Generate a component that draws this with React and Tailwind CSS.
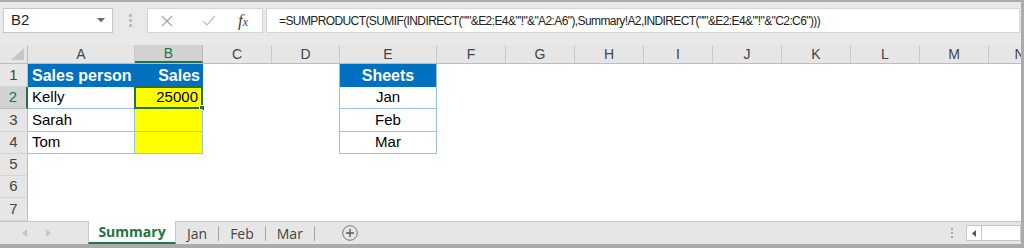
import React from 'react'

const cols = [
  { key: 'A', w: 'w-[107px]' },
  { key: 'B', w: 'w-[68px]' },
  { key: 'C', w: 'w-[69px]' },
  { key: 'D', w: 'w-[68px]' },
  { key: 'E', w: 'w-[97px]' },
  { key: 'F', w: 'w-[69px]' },
  { key: 'G', w: 'w-[69px]' },
  { key: 'H', w: 'w-[69px]' },
  { key: 'I', w: 'w-[69px]' },
  { key: 'J', w: 'w-[69px]' },
  { key: 'K', w: 'w-[69px]' },
  { key: 'L', w: 'w-[69px]' },
  { key: 'M', w: 'w-[69px]' },
  { key: 'N', w: 'w-[62px]' },
]

const rowHeights = ['h-[23px]', 'h-[22px]', 'h-[23px]', 'h-[22px]', 'h-[22px]', 'h-[22px]', 'h-[23px]']

const formula =
  '=SUMPRODUCT(SUMIF(INDIRECT("\'"&E2:E4&"\'!"&"A2:A6"),Summary!A2,INDIRECT("\'"&E2:E4&"\'!"&"C2:C6")))'

const blue = 'border-[#9bc2e6]'

// contents and styling of the filled cells
const cells = {
  A1: { text: 'Sales person', cls: 'bg-[#0070c0] text-white font-bold text-[16px] justify-start pl-[4px]' },
  B1: { text: 'Sales', cls: 'bg-[#0070c0] text-white font-bold text-[16px] justify-end pr-[3px]' },
  E1: { text: 'Sheets', cls: `bg-[#0070c0] text-white font-bold text-[16px] justify-center border-r ${blue}` },
  D1: { cls: `border-r ${blue}` },
  A2: { text: 'Kelly', cls: `justify-start pl-[4px] border-r border-b ${blue}` },
  B2: { text: '25000', cls: `bg-[#ffff00] justify-end pr-[4px] border-r border-b ${blue}`, selected: true },
  D2: { cls: `border-r ${blue}` },
  E2: { text: 'Jan', cls: `justify-center border-r border-b ${blue}` },
  A3: { text: 'Sarah', cls: `justify-start pl-[4px] border-r border-b ${blue}` },
  B3: { cls: `bg-[#ffff00] border-r border-b ${blue}` },
  D3: { cls: `border-r ${blue}` },
  E3: { text: 'Feb', cls: `justify-center border-r border-b ${blue}` },
  A4: { text: 'Tom', cls: `justify-start pl-[4px] border-r border-b ${blue}` },
  B4: { cls: `bg-[#ffff00] border-r border-b ${blue}` },
  D4: { cls: `border-r ${blue}` },
  E4: { text: 'Mar', cls: `justify-center border-r border-b ${blue}` },
}

function FormulaBar() {
  return (
    <div className="h-[43px] flex items-start pt-[6px] pl-[3px] pr-[1px] shrink-0">
      <div className="w-[110px] h-[25px] bg-white border border-[#c6c6c6] flex items-center justify-between pl-[7px] pr-[7px]">
        <span className="text-[15px] text-[#222]">B2</span>
        <svg width="8" height="5" viewBox="0 0 8 5">
          <path d="M0 0h8L4 4.5z" fill="#6b6b6b" />
        </svg>
      </div>
      <div className="w-[34px] h-[25px] flex flex-col items-center justify-center gap-[2px]">
        <span className="w-[3px] h-[3px] bg-[#bdbdbd]" />
        <span className="w-[3px] h-[3px] bg-[#bdbdbd]" />
        <span className="w-[3px] h-[3px] bg-[#bdbdbd]" />
      </div>
      <div className="w-[116px] h-[25px] bg-white border border-[#d4d4d4] flex items-center">
        <svg className="ml-[13px]" width="12" height="12" viewBox="0 0 12 12">
          <path d="M1 1l10 10M11 1L1 11" stroke="#a6a6a6" strokeWidth="1.2" />
        </svg>
        <svg className="ml-[29px]" width="14" height="11" viewBox="0 0 14 11">
          <path d="M1 6l4 4 8-9" stroke="#c4c4c4" strokeWidth="1.4" fill="none" />
        </svg>
        <span className="ml-[22px] font-['Liberation_Serif',serif] italic text-[17px] text-[#444] leading-none">
          f<span className="text-[12px]">x</span>
        </span>
      </div>
      <div className="flex-1 ml-[3px] h-[25px] bg-white border border-[#d4d4d4] flex items-center pl-[12px] overflow-hidden">
        <span className="font-['Liberation_Sans',Arial,sans-serif] text-[12px] text-[#222] whitespace-nowrap tracking-[-0.6px]">
          {formula}
        </span>
      </div>
    </div>
  )
}

function ColumnHeaders() {
  return (
    <div className="flex h-[19px] shrink-0 bg-[#e6e6e6] border-b border-[#bdbdbd]">
      <div className="w-[28px] shrink-0 border-r border-[#bdbdbd] flex items-end justify-end pr-[3px] pb-[3px]">
        <svg width="13" height="12" viewBox="0 0 13 12">
          <path d="M13 0V12H0z" fill="#c6c6c6" />
        </svg>
      </div>
      {cols.map((c) =>
        c.key === 'B' ? (
          <div
            key={c.key}
            className={`${c.w} shrink-0 bg-[#d2d2d2] border-r border-[#bdbdbd] border-b-2 border-b-[#217346] flex items-center justify-center text-[14px] text-[#217346]`}
          >
            {c.key}
          </div>
        ) : (
          <div
            key={c.key}
            className={`${c.w} shrink-0 border-r border-[#c8c8c8] flex items-center justify-center text-[14px] text-[#444]`}
          >
            {c.key}
          </div>
        )
      )}
    </div>
  )
}

function Row({ n, h }) {
  const active = n === 2
  return (
    <div className={`flex ${h} shrink-0 bg-white`}>
      <div
        className={`w-[28px] shrink-0 flex items-center justify-center text-[15px] border-b ${
          active
            ? 'bg-[#d2d2d2] text-[#217346] border-r-2 border-r-[#217346] border-b-[#bdbdbd]'
            : 'bg-[#e6e6e6] text-[#444] border-r border-[#bdbdbd] border-b-[#d4d4d4]'
        }`}
      >
        {n}
      </div>
      {cols.map((c) => {
        const cell = cells[`${c.key}${n}`]
        return (
          <div
            key={c.key}
            className={`${c.w} shrink-0 relative flex items-center text-[15px] text-black ${cell ? cell.cls : ''}`}
          >
            {cell && cell.text}
            {cell && cell.selected && (
              <div className="absolute -left-px -top-px -right-px -bottom-px border-2 border-[#217346]">
                <div className="absolute -right-[4px] -bottom-[4px] w-[6px] h-[6px] bg-[#217346] border border-white" />
              </div>
            )}
          </div>
        )
      })}
    </div>
  )
}

function TabBar() {
  const tabs = ['Jan', 'Feb', 'Mar']
  return (
    <div className="h-[23px] shrink-0 flex items-stretch border-t border-[#c6c6c6] bg-[#e6e6e6] font-['Open_Sans',sans-serif]">
      <div className="w-[88px] shrink-0 flex items-center pl-[22px] gap-[19px]">
        <svg width="5" height="8" viewBox="0 0 5 8">
          <path d="M5 0v8L0 4z" fill="#c4c4c4" />
        </svg>
        <svg width="5" height="8" viewBox="0 0 5 8">
          <path d="M0 0v8l5-4z" fill="#c4c4c4" />
        </svg>
      </div>
      <div className="w-[88px] shrink-0 bg-white border-l border-r border-[#c6c6c6] border-b-2 border-b-[#217346] flex items-center justify-center text-[14px] font-bold text-[#217346] -mt-px">
        Summary
      </div>
      {tabs.map((t) => (
        <div key={t} className="flex items-center">
          <span className="px-[11px] text-[14px] text-[#444]">{t}</span>
          <span className="w-px h-[15px] bg-[#a6a6a6]" />
        </div>
      ))}
      <div className="ml-[27px] flex items-center">
        <svg width="16" height="16" viewBox="0 0 16 16">
          <circle cx="8" cy="8" r="7.3" fill="none" stroke="#7a7a7a" strokeWidth="1" />
          <path d="M8 4v8M4 8h8" stroke="#5a5a5a" strokeWidth="1.4" />
        </svg>
      </div>
      <div className="flex-1" />
      <div className="flex flex-col items-center justify-center gap-[2px] mr-[13px]">
        <span className="w-[2px] h-[2px] bg-[#a6a6a6]" />
        <span className="w-[2px] h-[2px] bg-[#a6a6a6]" />
        <span className="w-[2px] h-[2px] bg-[#a6a6a6]" />
      </div>
      <div className="flex items-center">
        <div className="w-[55px] h-[16px] bg-white border border-[#c6c6c6] flex">
          <div className="w-[15px] border-r border-[#c6c6c6] flex items-center justify-center">
            <svg width="4" height="7" viewBox="0 0 4 7">
              <path d="M4 0v7L0 3.5z" fill="#555" />
            </svg>
          </div>
        </div>
      </div>
    </div>
  )
}

export default function App() {
  return (
    <div className="w-[1024px] h-[248px] overflow-hidden bg-[#e9e9e9] border-t-2 border-r-[3px] border-b-4 border-[#ababab] flex flex-col font-['Liberation_Sans',Arial,sans-serif]">
      <FormulaBar />
      <div className="overflow-hidden">
        <ColumnHeaders />
        {rowHeights.map((h, i) => (
          <Row key={i} n={i + 1} h={h} />
        ))}
      </div>
      <TabBar />
    </div>
  )
}
